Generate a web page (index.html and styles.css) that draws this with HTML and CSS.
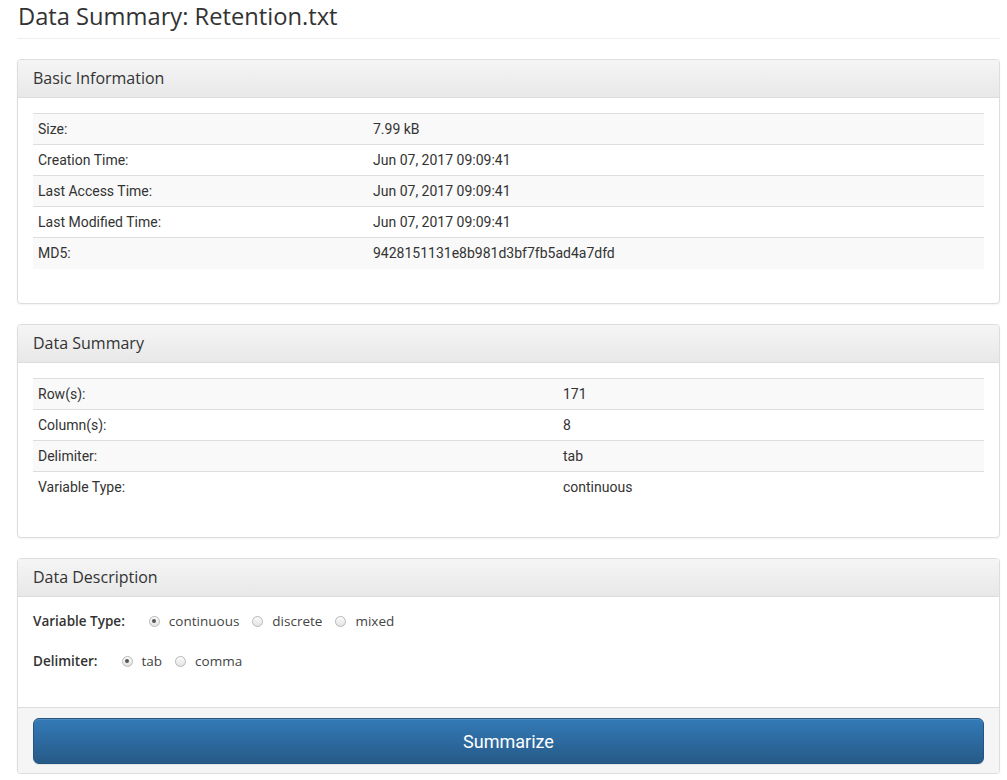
FILE: index.html
```html
<!DOCTYPE html>
<html>
<head>
<meta charset="utf-8">
<link rel="stylesheet" href="styles.css">
</head>
<body>
<div class="page">
  <h1 class="title">Data Summary: Retention.txt</h1>

  <div class="panel">
    <div class="panel-heading">Basic Information</div>
    <div class="panel-body">
      <table class="table">
        <tr><td class="c1">Size:</td><td>7.99 kB</td></tr>
        <tr><td class="c1">Creation Time:</td><td>Jun 07, 2017 09:09:41</td></tr>
        <tr><td class="c1">Last Access Time:</td><td>Jun 07, 2017 09:09:41</td></tr>
        <tr><td class="c1">Last Modified Time:</td><td>Jun 07, 2017 09:09:41</td></tr>
        <tr><td class="c1">MD5:</td><td>9428151131e8b981d3bf7fb5ad4a7dfd</td></tr>
      </table>
    </div>
  </div>

  <div class="panel">
    <div class="panel-heading">Data Summary</div>
    <div class="panel-body tall">
      <table class="table">
        <tr><td class="c2">Row(s):</td><td>171</td></tr>
        <tr><td class="c2">Column(s):</td><td>8</td></tr>
        <tr><td class="c2">Delimiter:</td><td>tab</td></tr>
        <tr><td class="c2">Variable Type:</td><td>continuous</td></tr>
      </table>
    </div>
  </div>

  <div class="panel last">
    <div class="panel-heading">Data Description</div>
    <div class="form-body">
      <div class="form-row">
        <span class="label">Variable Type:</span>
        <label class="radio"><span class="dot checked"></span>continuous</label>
        <label class="radio"><span class="dot"></span>discrete</label>
        <label class="radio"><span class="dot"></span>mixed</label>
      </div>
      <div class="form-row">
        <span class="label">Delimiter:</span>
        <label class="radio"><span class="dot checked"></span>tab</label>
        <label class="radio"><span class="dot"></span>comma</label>
      </div>
    </div>
    <div class="panel-footer">
      <button class="btn">Summarize</button>
    </div>
  </div>
</div>
</body>
</html>
```

FILE: styles.css
```css
html, body {
  margin: 0;
  padding: 0;
  background: #fff;
}
body {
  font-family: "Open Sans", "DejaVu Sans", sans-serif;
  color: #333;
}
.page {
  padding: 0 7px 0 17px;
}
.title {
  margin: 0 0 20px 0;
  padding: 0 0 0 1px;
  height: 39px;
  box-sizing: border-box;
  font-size: 23.7px;
  font-weight: 400;
  line-height: 32px;
  color: #333;
  border-bottom: 1px solid #eee;
}
.panel {
  border: 1px solid #ddd;
  border-radius: 4px;
  box-shadow: 0 1px 2px rgba(0,0,0,0.05);
  margin-bottom: 20px;
  background: #fff;
}
.panel.last {
  margin-bottom: 0;
}
.panel-heading {
  height: 38px;
  box-sizing: border-box;
  padding: 0 15px;
  line-height: 36px;
  font-size: 16px;
  color: #333;
  background: linear-gradient(#f5f5f5, #e8e8e8);
  border-bottom: 1px solid #ddd;
  border-radius: 3px 3px 0 0;
}
.panel-body {
  padding: 15px;
}
.panel-body.tall {
  padding-bottom: 16px;
}
.table {
  width: 100%;
  border-collapse: collapse;
  margin-bottom: 19px;
  font-family: "Roboto", "Liberation Sans", sans-serif;
  font-size: 14px;
  color: #333;
}
.table td {
  height: 31px;
  box-sizing: border-box;
  padding: 0 5px;
  border-top: 1px solid #ddd;
  vertical-align: middle;
}
.table tr:nth-child(odd) td {
  background: #f9f9f9;
}
.table td.c1 { width: 335px; }
.table td.c2 { width: 525px; }
.form-body {
  padding: 13px 15px 17px 15px;
}
.form-row {
  display: flex;
  align-items: center;
  height: 22px;
  font-size: 13.5px;
  margin-bottom: 18px;
}
.label {
  font-weight: 600;
  color: #333;
  margin-right: 24px;
}
.radio {
  display: inline-flex;
  align-items: center;
  color: #444;
  margin-right: 13px;
}
.dot {
  width: 11px;
  height: 11px;
  border-radius: 50%;
  border: 1px solid #b8b8b8;
  background: linear-gradient(#fafafa, #e4e4e4);
  margin-right: 9px;
  position: relative;
  box-sizing: border-box;
}
.dot.checked::after {
  content: "";
  position: absolute;
  left: 2.5px;
  top: 2.5px;
  width: 4px;
  height: 4px;
  border-radius: 50%;
  background: #555;
}
.panel-footer {
  background: #f5f5f5;
  border-top: 1px solid #ddd;
  padding: 10px 15px 9px 15px;
  border-radius: 0 0 3px 3px;
}
.btn {
  display: block;
  width: 100%;
  height: 46px;
  border: 1px solid #245580;
  border-radius: 6px;
  background: linear-gradient(#337ab7, #265a88);
  color: #fff;
  font-family: "Roboto", "Liberation Sans", sans-serif;
  font-size: 18px;
  box-shadow: inset 0 1px 0 rgba(255,255,255,0.15), 0 1px 1px rgba(0,0,0,0.075);
  cursor: pointer;
}
```
